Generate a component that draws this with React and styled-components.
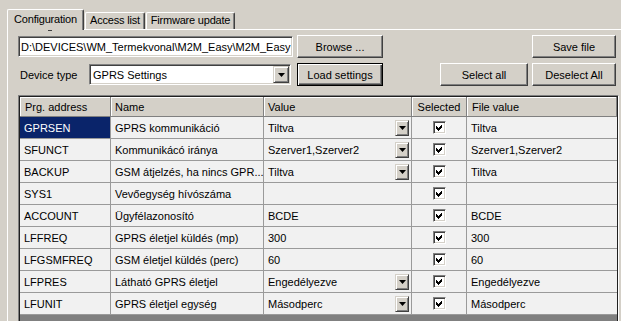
import React from 'react';
import styled, { createGlobalStyle } from 'styled-components';

const GlobalStyle = createGlobalStyle`
  html, body {
    margin: 0;
    padding: 0;
    background: #d4d0c8;
    overflow: hidden;
  }
  body {
    font-family: "Liberation Sans", Arial, sans-serif;
    font-size: 11px;
    color: #000;
  }
`;

const Window = styled.div`
  width: 621px;
  height: 321px;
  padding-top: 9px;
  box-sizing: border-box;
  overflow: hidden;
`;

const TabStrip = styled.div`
  display: flex;
  align-items: flex-end;
  height: 20px;
  padding-left: 7px;
  gap: 1px;
`;

const Tab = styled.div`
  position: relative;
  z-index: ${p => (p.$active ? 1 : 0)};
  box-sizing: border-box;
  width: ${p => p.$w}px;
  height: ${p => (p.$active ? '21px' : '17px')};
  margin-bottom: ${p => (p.$active ? '-1px' : '0')};
  padding-top: ${p => (p.$active ? '2px' : '0')};
  line-height: 14px;
  text-align: center;
  white-space: nowrap;
  letter-spacing: -0.2px;
  background: #d4d0c8;
  border-top: 1px solid #fff;
  border-left: 1px solid #fff;
  border-right: 1px solid #404040;
  box-shadow: inset -1px 0 #808080;
  border-radius: 2px 2px 0 0;

  ${p => p.$active && `
    &::after {
      content: '';
      position: absolute;
      left: 40px;
      top: 20px;
      width: 4px;
      height: 1px;
      background: #404040;
    }
  `}
`;

const Panel = styled.div`
  margin-left: 7px;
  height: 300px;
  padding: 5px 2px 0 10px;
  border-top: 1px solid #fff;
  border-left: 1px solid #fff;
`;

const ToolRow = styled.div`
  display: flex;
  align-items: center;
  height: 23px;
  padding-right: 3px;
  margin-top: ${p => p.$gap || 0}px;
`;

const Button = styled.button`
  box-sizing: border-box;
  flex-shrink: 0;
  width: ${p => p.$w}px;
  height: 23px;
  margin: 0;
  margin-left: ${p => (p.$push ? 'auto' : `${p.$ml || 0}px`)};
  padding: 0;
  font: inherit;
  color: #000;
  background: #d4d0c8;
  border: 1px solid;
  border-color: ${p => (p.$default ? '#000' : '#fff #404040 #404040 #fff')};
  box-shadow: ${p => (p.$default
    ? 'inset 1px 1px #fff, inset -1px -1px #404040, inset -2px -2px #808080'
    : 'inset -1px -1px #808080, inset 1px 1px #d4d0c8')};
`;

const Field = styled.div`
  box-sizing: border-box;
  flex-shrink: 0;
  width: ${p => p.$w}px;
  height: 21px;
  display: flex;
  align-items: center;
  justify-content: space-between;
  padding: 0 1px 0 2px;
  background: #fff;
  border: 1px solid;
  border-color: #808080 #fff #fff #808080;
  box-shadow: inset 1px 1px #404040, inset -1px -1px #d4d0c8;
  white-space: nowrap;
  overflow: hidden;
`;

const FieldText = styled.span`
  min-width: 0;
  flex: 1;
  overflow: hidden;
  padding-left: ${p => p.$pl || 0}px;
`;

const Label = styled.span`
  width: 69px;
  padding-left: 2px;
`;

const DropButton = styled.span`
  box-sizing: border-box;
  flex-shrink: 0;
  width: ${p => p.$w || 16}px;
  height: ${p => p.$h || 17}px;
  margin-right: ${p => p.$mr || 0}px;
  display: flex;
  align-items: center;
  justify-content: center;
  background: #d4d0c8;
  border: 1px solid;
  border-color: #d4d0c8 #404040 #404040 #d4d0c8;
  box-shadow: inset 1px 1px #fff, inset -1px -1px #808080;
`;

const Arrow = () => (
  <svg width="7" height="4" viewBox="0 0 7 4">
    <polygon points="0,0 7,0 3.5,4" fill="#000" />
  </svg>
);

const GridFrame = styled.div`
  margin-top: 9px;
  width: 601px;
  box-sizing: border-box;
  border: 1px solid;
  border-color: #808080 #fff #fff #808080;
`;

const GridBody = styled.div`
  border: 1px solid #202020;
  background: #808080;
  padding-bottom: 30px;
`;

const GridRow = styled.div`
  display: grid;
  grid-template-columns: 91px 153px 148px 55px 1fr;
  height: ${p => (p.$header ? 20 : 22)}px;
`;

const HeadCell = styled.div`
  display: flex;
  align-items: center;
  justify-content: ${p => (p.$center ? 'center' : 'flex-start')};
  padding-left: ${p => (p.$center ? 0 : p.$pl || 4)}px;
  background: #d4d0c8;
  border-right: 1px solid #808080;
  border-bottom: 1px solid #808080;
  box-shadow: inset 1px 1px #fff;
  white-space: nowrap;
`;

const Cell = styled.div`
  display: flex;
  align-items: center;
  justify-content: ${p => (p.$center ? 'center' : 'space-between')};
  padding-left: ${p => (p.$center ? 0 : 4)}px;
  background: ${p => (p.$focus ? '#0a246a' : '#f1f1f1')};
  color: ${p => (p.$focus ? '#fff' : '#000')};
  border-right: ${p => (p.$last ? 'none' : '1px solid #9a9a9a')};
  border-bottom: 1px solid #9a9a9a;
  white-space: nowrap;
  overflow: hidden;
`;

const CheckBox = styled.span`
  box-sizing: border-box;
  width: 13px;
  height: 13px;
  display: flex;
  background: #fff;
  border: 1px solid;
  border-color: #808080 #fff #fff #808080;
  box-shadow: inset 1px 1px #404040, inset -1px -1px #d4d0c8;
`;

const Check = () => (
  <CheckBox>
    <svg width="11" height="11" viewBox="0 0 11 11" shapeRendering="crispEdges">
      <polygon points="2,4 4,6 8,2 8,5 4,9 2,7" fill="#000" />
    </svg>
  </CheckBox>
);

const rows = [
  { addr: 'GPRSEN', name: 'GPRS kommunikáció', value: 'Tiltva', drop: true, file: 'Tiltva', focus: true },
  { addr: 'SFUNCT', name: 'Kommunikácó iránya', value: 'Szerver1,Szerver2', drop: true, file: 'Szerver1,Szerver2' },
  { addr: 'BACKUP', name: 'GSM átjelzés, ha nincs GPR...', value: 'Tiltva', drop: true, file: 'Tiltva' },
  { addr: 'SYS1', name: 'Vevőegység hívószáma', value: '', file: '' },
  { addr: 'ACCOUNT', name: 'Ügyfélazonosító', value: 'BCDE', file: 'BCDE' },
  { addr: 'LFFREQ', name: 'GPRS életjel küldés (mp)', value: '300', file: '300' },
  { addr: 'LFGSMFREQ', name: 'GSM életjel küldés (perc)', value: '60', file: '60' },
  { addr: 'LFPRES', name: 'Látható GPRS életjel', value: 'Engedélyezve', drop: true, file: 'Engedélyezve' },
  { addr: 'LFUNIT', name: 'GPRS életjel egység', value: 'Másodperc', drop: true, file: 'Másodperc' },
];

export default function App() {
  return (
    <Window>
      <GlobalStyle />
      <TabStrip>
        <Tab $active $w={77}>Configuration</Tab>
        <Tab $w={60}>Access list</Tab>
        <Tab $w={89}>Firmware update</Tab>
      </TabStrip>
      <Panel>
        <ToolRow>
          <Field $w={275}>
            <FieldText>D:\DEVICES\WM_Termekvonal\M2M_Easy\M2M_Easy</FieldText>
          </Field>
          <Button $w={86} $ml={4}>Browse ...</Button>
          <Button $w={84} $push>Save file</Button>
        </ToolRow>
        <ToolRow $gap={5}>
          <Label>Device type</Label>
          <Field $w={202}>
            <FieldText $pl={1}>GPRS Settings</FieldText>
            <DropButton><Arrow /></DropButton>
          </Field>
          <Button $w={86} $ml={6} $default>Load settings</Button>
          <Button $w={88} $push>Select all</Button>
          <Button $w={84} $ml={4}>Deselect All</Button>
        </ToolRow>
        <GridFrame>
          <GridBody>
            <GridRow $header>
              <HeadCell $pl={5}>Prg. address</HeadCell>
              <HeadCell>Name</HeadCell>
              <HeadCell>Value</HeadCell>
              <HeadCell $center>Selected</HeadCell>
              <HeadCell $pl={5}>File value</HeadCell>
            </GridRow>
            {rows.map(r => (
              <GridRow key={r.addr}>
                <Cell $focus={r.focus}>{r.addr}</Cell>
                <Cell>{r.name}</Cell>
                <Cell>
                  <span>{r.value}</span>
                  {r.drop && <DropButton $w={14} $h={16} $mr={2}><Arrow /></DropButton>}
                </Cell>
                <Cell $center><Check /></Cell>
                <Cell $last>{r.file}</Cell>
              </GridRow>
            ))}
          </GridBody>
        </GridFrame>
      </Panel>
    </Window>
  );
}
